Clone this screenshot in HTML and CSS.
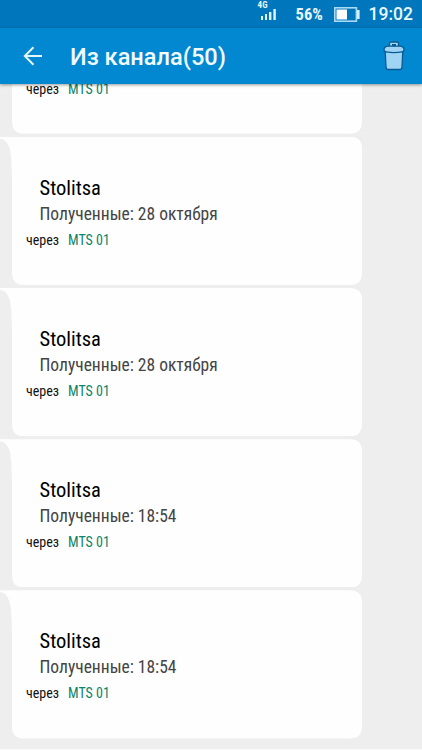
FILE: index.html
```
<!DOCTYPE html>
<html lang="ru">
<head>
    <meta charset="UTF-8">
    <meta name="viewport" content="width=device-width, initial-scale=1.0">
    <title>Из канала</title>
    <link rel="stylesheet" href="styles.css">
</head>
<body>

<div class="status-bar">
    <div class="network">
        <span class="network-type">4G</span>
        <svg class="signal" width="16" height="12" viewBox="0 0 16 12" fill="#e3f5ff">
            <rect x="0" y="7" width="2" height="4"/>
            <rect x="4" y="5" width="2" height="6"/>
            <rect x="8" y="3" width="2.4" height="8"/>
            <rect x="12.4" y="0" width="2.4" height="11"/>
        </svg>
    </div>
    <span class="percent">56%</span>
    <svg class="battery" width="26" height="15" viewBox="0 0 26 15">
        <rect x="0.8" y="0.8" width="21.6" height="13.4" fill="none" stroke="#a9dbf7" stroke-width="1.6"/>
        <rect x="2.5" y="2.5" width="10.5" height="10" fill="#fff"/>
        <rect x="23" y="3" width="2.6" height="9" fill="#d5effc"/>
    </svg>
    <span class="clock">19:02</span>
</div>

<header class="app-bar">
    <svg class="back" width="20" height="20" viewBox="0 0 20 20" fill="none" stroke="#e6f7ff" stroke-width="2">
        <path d="M19 10H2M10.5 1.3L1.8 10l8.7 8.7"/>
    </svg>
    <h1 class="title">Из канала(50)</h1>
    <svg class="trash" width="22" height="30" viewBox="0 0 22 30" fill="#a0d4f5" stroke="#075a91" stroke-width="1.3">
        <path d="M6.5 5V2.5Q6.5 1 8 1h6q1.500 0 1.500 1.500V5"/>
        <path d="M9 4h4" stroke-width="2"/>
        <path d="M2.200 10l.8 16q.1 2.500 2.500 2.500h11q2.400 0 2.500-2.500l.8-16z"/>
        <path d="M1 9Q1 5.500 5 5.200h12q4 .3 4 3.800 0 1.500-2 1.800-8 1.600-16 0Q1 10.500 1 9z"/>
    </svg>
</header>

<main class="messages">
    <div class="message message-partial">
        <div class="via"><span class="via-label">через</span><span class="sim">MTS 01</span></div>
    </div>
    <div class="message">
        <div class="sender">Stolitsa</div>
        <div class="received">Полученные: 28 октября</div>
        <div class="via"><span class="via-label">через</span><span class="sim">MTS 01</span></div>
    </div>
    <div class="message">
        <div class="sender">Stolitsa</div>
        <div class="received">Полученные: 28 октября</div>
        <div class="via"><span class="via-label">через</span><span class="sim">MTS 01</span></div>
    </div>
    <div class="message">
        <div class="sender">Stolitsa</div>
        <div class="received">Полученные: 18:54</div>
        <div class="via"><span class="via-label">через</span><span class="sim">MTS 01</span></div>
    </div>
    <div class="message">
        <div class="sender">Stolitsa</div>
        <div class="received">Полученные: 18:54</div>
        <div class="via"><span class="via-label">через</span><span class="sim">MTS 01</span></div>
    </div>
</main>

</body>
</html>
```
FILE: styles.css
```
* {
    box-sizing: border-box;
}
body {
    margin: 0;
    height: 750px;
    display: flex;
    flex-direction: column;
    overflow: hidden;
    background: #eee;
    font-family: Roboto, sans-serif;
}
.status-bar {
    flex: none;
    height: 28px;
    display: flex;
    align-items: center;
    justify-content: flex-end;
    padding-right: 9px;
    background: #0077bc;
    color: #e9f8ff;
}
.network {
    width: 20px;
    height: 26px;
    margin-right: 18px;
}
.network-type {
    display: block;
    font-size: 9px;
    font-weight: 700;
    font-stretch: 75%;
    line-height: 9px;
}
.signal {
    display: block;
    margin: -1px 0 0 3px;
}
.percent {
    width: 38px;
    font-size: 16.5px;
    font-weight: 700;
    font-stretch: 75%;
}
.battery {
    margin-right: 9px;
}
.clock {
    font-size: 17.5px;
    font-weight: 500;
}
.app-bar {
    flex: none;
    height: 56px;
    display: flex;
    align-items: center;
    padding: 0 17px 0 23px;
    background: #0288d1;
    box-shadow: 0 1px 3px rgba(0, 0, 0, 0.4);
    z-index: 1;
}
.title {
    flex: 1;
    margin: 2px 0 0 27px;
    color: #f1fbff;
    font-size: 23.6px;
    font-weight: 500;
}
.messages {
    flex: 1;
    min-height: 0;
    display: flex;
    flex-direction: column;
    justify-content: flex-end; /* scrolled to the last message */
    gap: 3px;
    padding-bottom: 10.500px;
    border-bottom: 1px solid #fafafa;
    overflow: hidden;
    font-stretch: 75%;
}
.message {
    flex: none;
    width: 362px;
    height: 148.200px;
    padding: 38px 0 0 26px;
    background: #fefefe;
    /* bubble with the tail in the top left corner */
    clip-path: path("M0 0H350Q362 0 362 12V136Q362 148.200 350 148.200H24Q12 148.200 12 136V52Q12 18 9.500 11Q6 2 0 2Z");
}
.message-partial {
    padding-top: 90px;
}
.sender {
    margin-left: 13.500px;
    color: #000;
    font-size: 20.5px;
    line-height: 26px;
}
.received {
    margin-left: 13.500px;
    color: #444;
    font-size: 17.5px;
    line-height: 26px;
}
.via {
    display: flex;
    gap: 9px;
    font-size: 14px;
    line-height: 26px;
}
.via-label {
    color: #111;
}
.sim {
    color: #0c8468;
}
```
